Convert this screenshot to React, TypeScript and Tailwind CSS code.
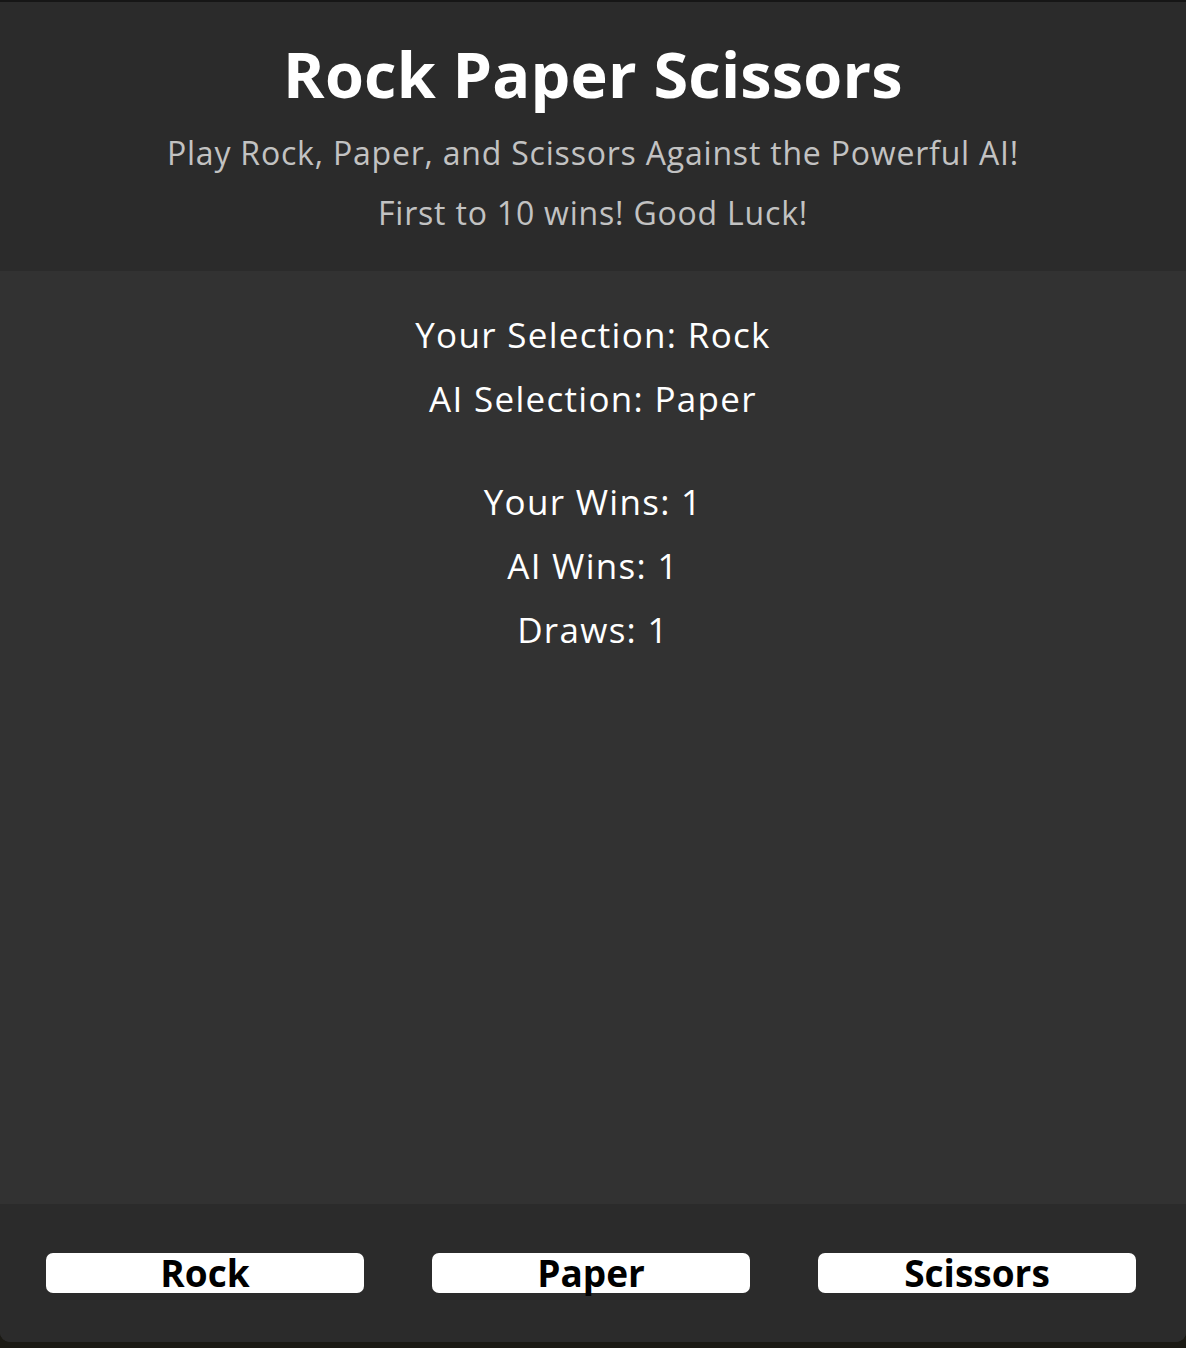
import React from "react";

const font = { fontFamily: '"Open Sans", "DejaVu Sans", sans-serif' };

export default function App() {
  const choices = ["Rock", "Paper", "Scissors"];
  return (
    <div className="h-[1348px] w-[1186px] bg-[#1b1a14]" style={font}>
      <div className="flex h-[1342px] flex-col overflow-hidden rounded-b-[10px] bg-[#323232]">
        <header className="border-t-2 border-[#161616] bg-[#2b2b2b] pt-[40px] pb-[28px] text-center">
          <h1 className="text-[63px] font-bold leading-[64px] tracking-[0.2px] text-white">Rock Paper Scissors</h1>
          <div className="mt-[17px] text-[32px] leading-[60px] tracking-[0.8px] text-[#c2c2c2]">
            <p>Play Rock, Paper, and Scissors Against the Powerful AI!</p>
            <p>First to 10 wins! Good Luck!</p>
          </div>
        </header>

        <main className="flex-1 pt-[32px] text-center text-[35px] leading-[64px] tracking-[1.3px] text-white">
          <p>Your Selection: Rock</p>
          <p>AI Selection: Paper</p>
          <div className="mt-[39px]">
            <p>Your Wins: 1</p>
            <p>AI Wins: 1</p>
            <p>Draws: 1</p>
          </div>
        </main>

        <footer className="flex h-[138px] gap-[68px] bg-[#2b2b2b] pt-[49px] pl-[46px]">
          {choices.map((c) => (
            <button
              key={c}
              className="flex h-[40px] w-[318px] items-center justify-center rounded-[7px] bg-white pb-[2px] text-[37px] font-bold leading-none text-black"
            >
              {c}
            </button>
          ))}
        </footer>
      </div>
    </div>
  );
}
